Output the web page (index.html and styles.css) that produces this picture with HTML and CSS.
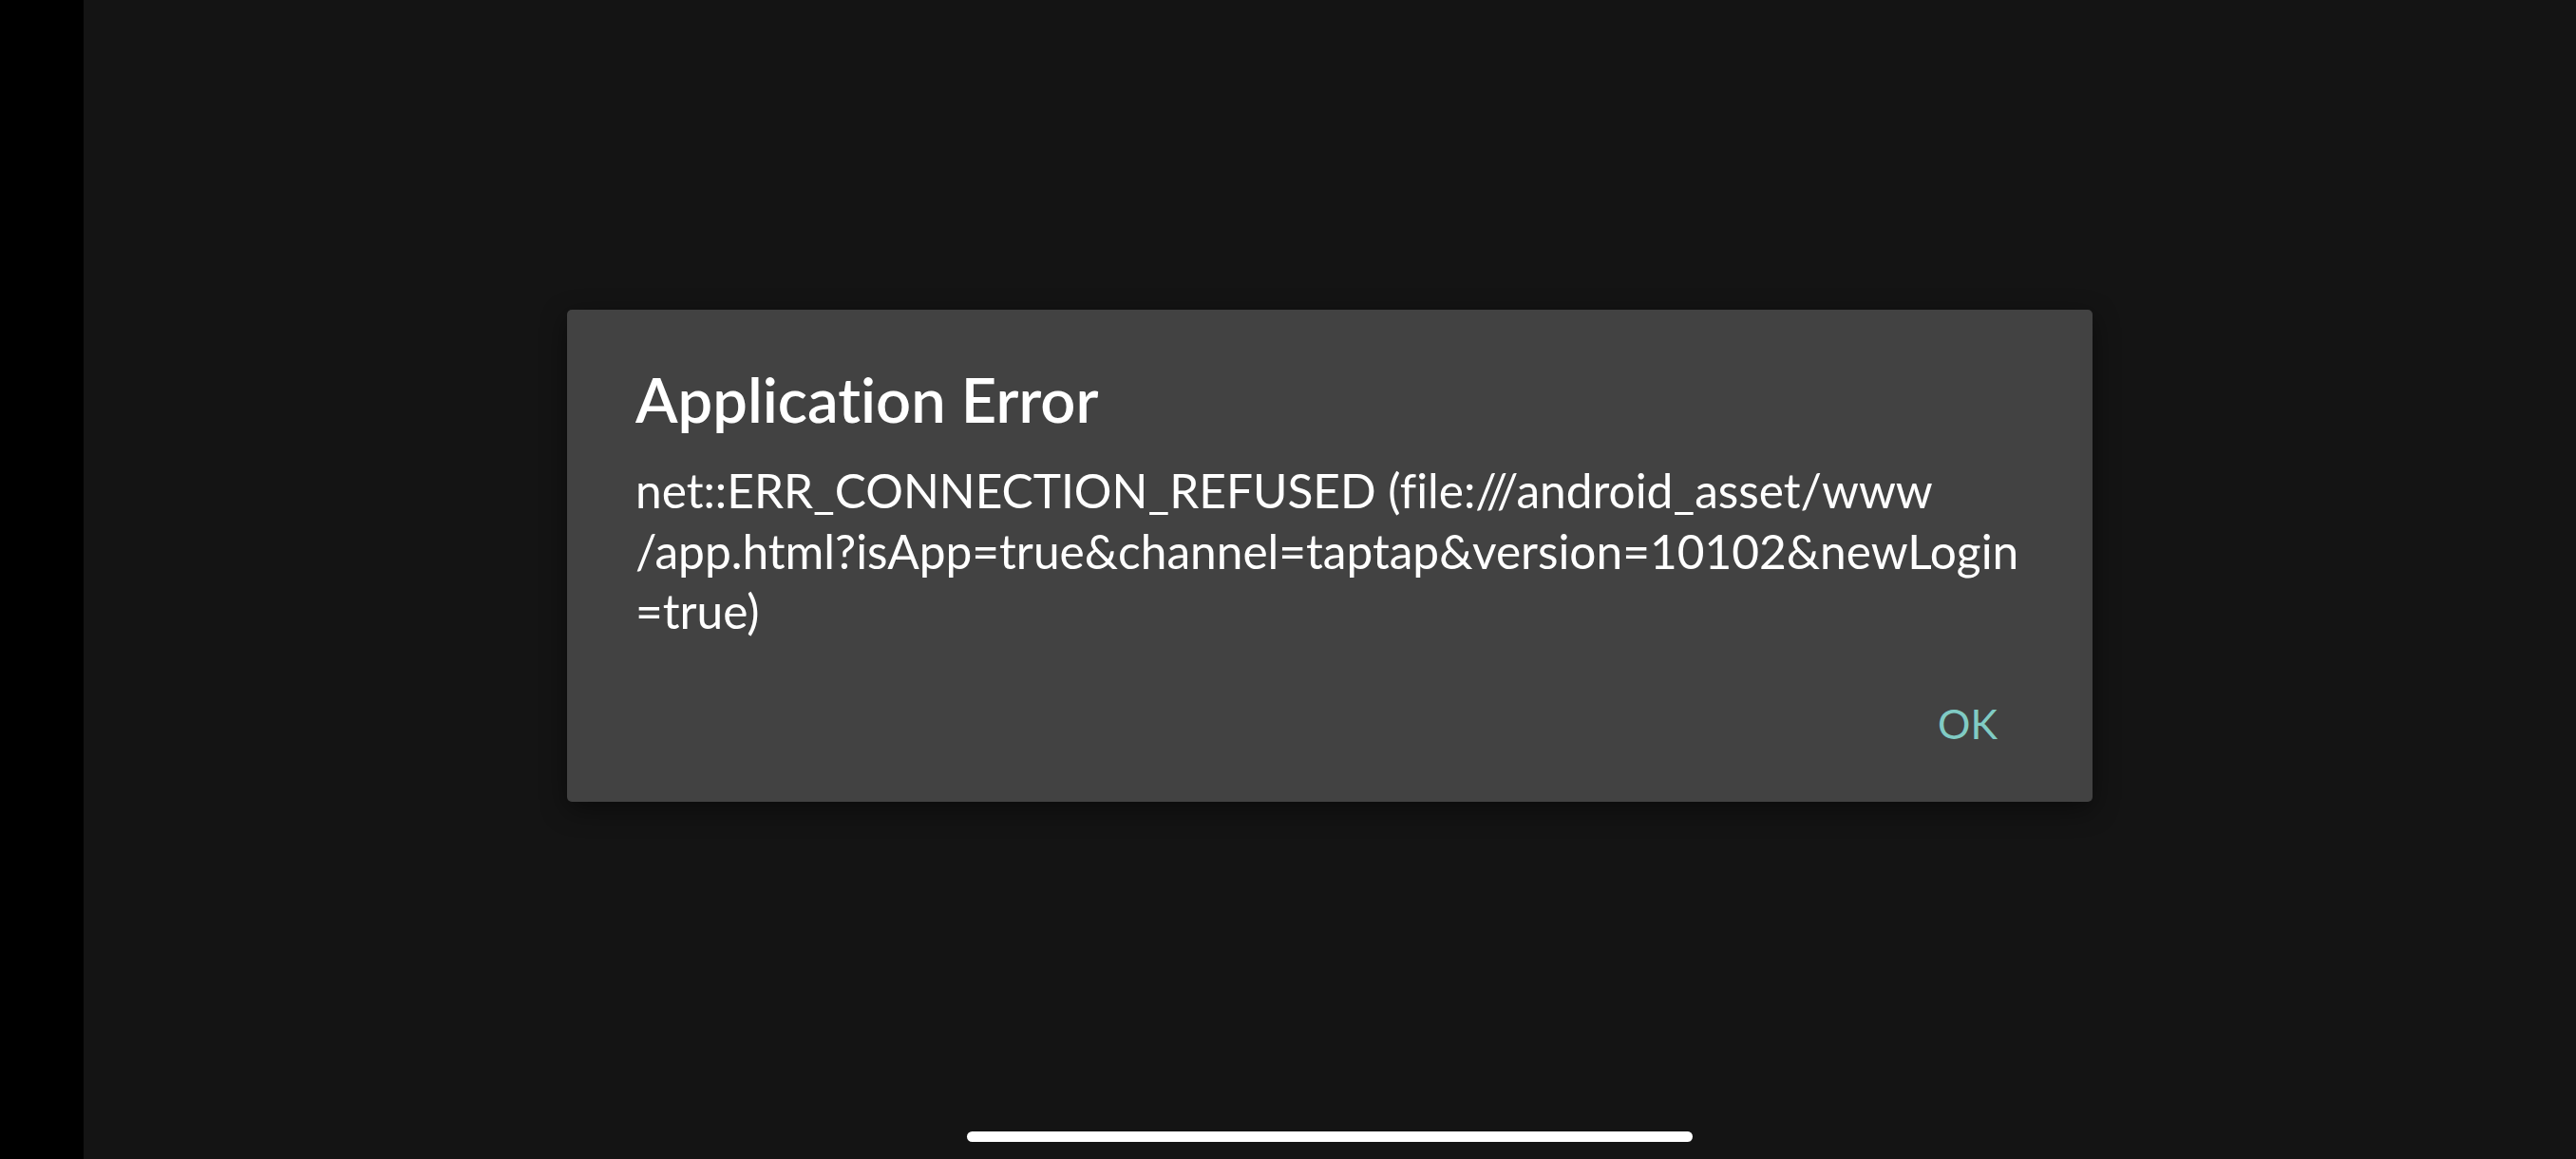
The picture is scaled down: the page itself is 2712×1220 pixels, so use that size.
FILE: index.html
```html
<!DOCTYPE html>
<html lang="en">
<head>
<meta charset="utf-8">
<title>Application Error</title>
<link rel="stylesheet" href="styles.css">
</head>
<body>
<div class="strip"></div>
<main class="screen">
  <div class="dialog" role="alertdialog">
    <h1 class="title">Application Error</h1>
    <p class="message">net::ERR_CONNECTION_REFUSED (file:///android_asset/www<br>/app.html?isApp=true&amp;channel=taptap&amp;version=10102&amp;newLogin<br>=true)</p>
    <div class="actions"><button class="btn" type="button">OK</button></div>
  </div>
  <div class="spacer"></div>
  <div class="home-indicator"></div>
</main>
</body>
</html>
```
FILE: styles.css
```css
html, body {
  margin: 0;
  padding: 0;
  height: 100%;
}
body {
  display: flex;
  width: 2712px;
  height: 1220px;
  background: #141414;
  font-family: Lato, "Noto Sans", sans-serif;
  font-variant-ligatures: none;
  font-feature-settings: "liga" 0, "clig" 0, "dlig" 0;
  overflow: hidden;
}
.strip {
  width: 88px;
  flex: none;
  background: #000;
}
.screen {
  flex: 1;
  display: flex;
  flex-direction: column;
  align-items: center;
}
.dialog {
  margin-top: 326px;
  width: 1606px;
  box-sizing: border-box;
  padding: 55px 72px 0 72px;
  background: #424242;
  border-radius: 5px;
  box-shadow: 0 8px 28px rgba(0, 0, 0, 0.45);
  color: #fff;
}
.title {
  margin: 0;
  font-size: 65px;
  line-height: 78px;
  font-weight: 600;
  color: #fff;
}
.message {
  margin: 26px 0 0 0;
  font-size: 49.6px;
  line-height: 63.5px;
  font-weight: 400;
  color: #fff;
}
.actions {
  display: flex;
  justify-content: flex-end;
  margin-top: 60px;
  padding-bottom: 56px;
  margin-right: 28px;
}
.btn {
  background: none;
  border: 0;
  padding: 0;
  font-family: inherit;
  font-size: 43px;
  line-height: 52px;
  color: #80cbc4;
}
.spacer {
  flex: 1;
}
.home-indicator {
  width: 764px;
  height: 11px;
  border-radius: 6px;
  background: #fff;
  margin-bottom: 18px;
}
```
